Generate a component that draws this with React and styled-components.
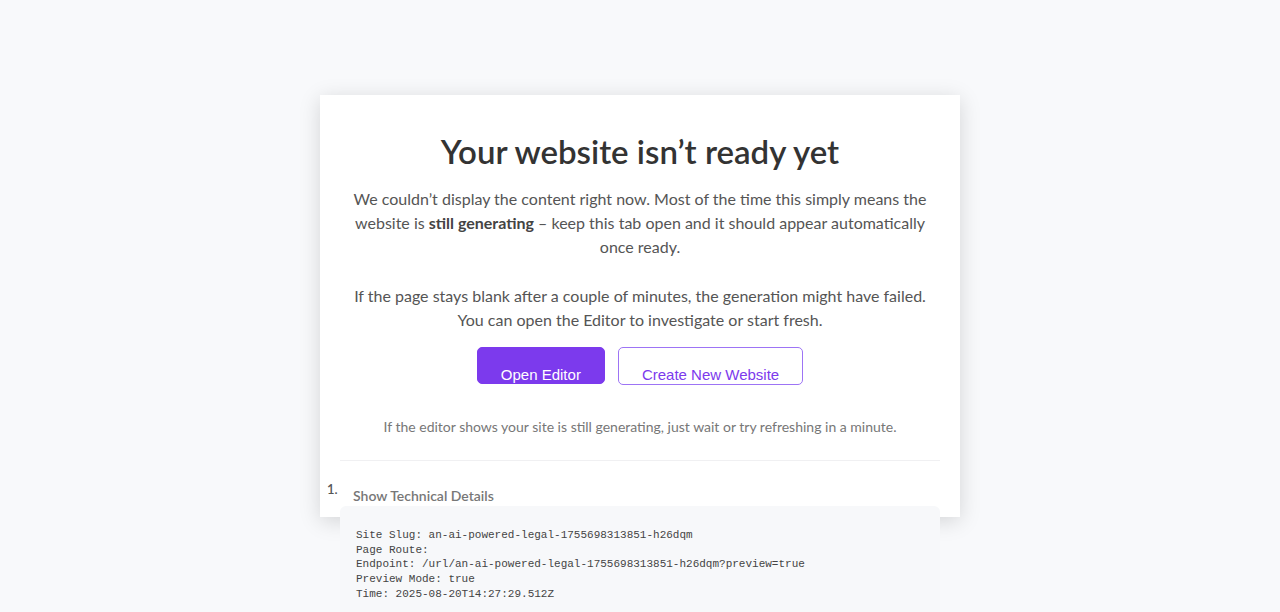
import React from "react";
import styled, { createGlobalStyle } from "styled-components";

const Global = createGlobalStyle`
  html, body { margin: 0; padding: 0; }
  body {
    background: #f8f9fb;
    font-family: "Lato", "Open Sans", sans-serif;
    color: #333;
  }
`;

const Page = styled.div`
  display: flex;
  justify-content: center;
  padding-top: 95px;
  min-height: 612px;
  box-sizing: border-box;
`;

const Card = styled.div`
  width: 640px;
  height: 422px;
  box-sizing: border-box;
  background: #fff;
  box-shadow: 0 4px 20px rgba(0, 0, 0, 0.15);
  padding: 34px 20px 0;
  display: flex;
  flex-direction: column;
  align-items: center;
  text-align: center;
`;

const Title = styled.h1`
  margin: 0 0 14px;
  font-size: 33px;
  font-weight: 600;
  line-height: 44px;
  color: #333;
`;

const Text = styled.p`
  margin: 0;
  font-size: 16px;
  line-height: 24.2px;
  color: #555;
  strong { font-weight: 700; color: #444; }
`;

const Actions = styled.div`
  display: flex;
  gap: 13px;
  margin-top: 15px;
`;

const Button = styled.button`
  box-sizing: border-box;
  padding: 18px 23px 2px;
  border-radius: 5px;
  font-family: "Liberation Sans", Arial, sans-serif;
  font-size: 15px;
  line-height: 17px;
  cursor: pointer;
  border: 1px solid ${(p) => (p.$outline ? "#9d74f5" : "#7c3aed")};
  background: ${(p) => (p.$outline ? "#fff" : "#7c3aed")};
  color: ${(p) => (p.$outline ? "#7c3aed" : "#fff")};
  height: ${(p) => (p.$outline ? "38px" : "37px")};
`;

const Hint = styled.p`
  margin: 32px 0 0;
  font-size: 14px;
  line-height: 20px;
  color: #777;
`;

const Divider = styled.hr`
  align-self: stretch;
  border: none;
  border-top: 1px solid #f0f0f2;
  margin: 23px 0 0;
`;

const List = styled.ol`
  align-self: stretch;
  margin: 19px 0 0;
  padding: 0;
  text-align: left;
  list-style: none;
`;

const Item = styled.li`
  font-size: 13px;
  color: #555;
  line-height: 16px;
  &::before {
    content: counter(list-item) ".";
    float: left;
    margin-left: -13px;
    margin-top: 1px;
    font-weight: 600;
  }
`;

const Details = styled.details`
  font-size: 14px;
  font-weight: 400;
`;

const Summary = styled.summary`
  display: block;
  list-style: none;
  padding: 6px 0 0 13px;
  font-size: 14px;
  font-weight: 600;
  color: #777;
  line-height: 20px;
  cursor: pointer;
  &::-webkit-details-marker { display: none; }
`;

const Pre = styled.pre`
  margin: 0;
  padding: 22px 16px 16px;
  background: #f7f8fa;
  border-radius: 6px;
  font-family: "Liberation Mono", "DejaVu Sans Mono", monospace;
  font-size: 11px;
  line-height: 14.6px;
  color: #444;
  font-weight: 400;
  white-space: pre;
`;

export default function App() {
  return (
    <>
      <Global />
      <Page>
        <Card>
          <Title>Your website isn’t ready yet</Title>
          <Text>
            We couldn’t display the content right now. Most of the time this simply means the
            website is <strong>still generating</strong> – keep this tab open and it should appear
            automatically once ready.
            <br />
            <br />
            If the page stays blank after a couple of minutes, the generation might have failed.
            You can open the Editor to investigate or start fresh.
          </Text>
          <Actions>
            <Button>Open Editor</Button>
            <Button $outline>Create New Website</Button>
          </Actions>
          <Hint>
            If the editor shows your site is still generating, just wait or try refreshing in a
            minute.
          </Hint>
          <Divider />
          <List>
            <Item>
              <Details open>
                <Summary>Show Technical Details</Summary>
                <Pre>{`Site Slug: an-ai-powered-legal-1755698313851-h26dqm
Page Route: 
Endpoint: /url/an-ai-powered-legal-1755698313851-h26dqm?preview=true
Preview Mode: true
Time: 2025-08-20T14:27:29.512Z`}</Pre>
              </Details>
            </Item>
          </List>
        </Card>
      </Page>
    </>
  );
}
